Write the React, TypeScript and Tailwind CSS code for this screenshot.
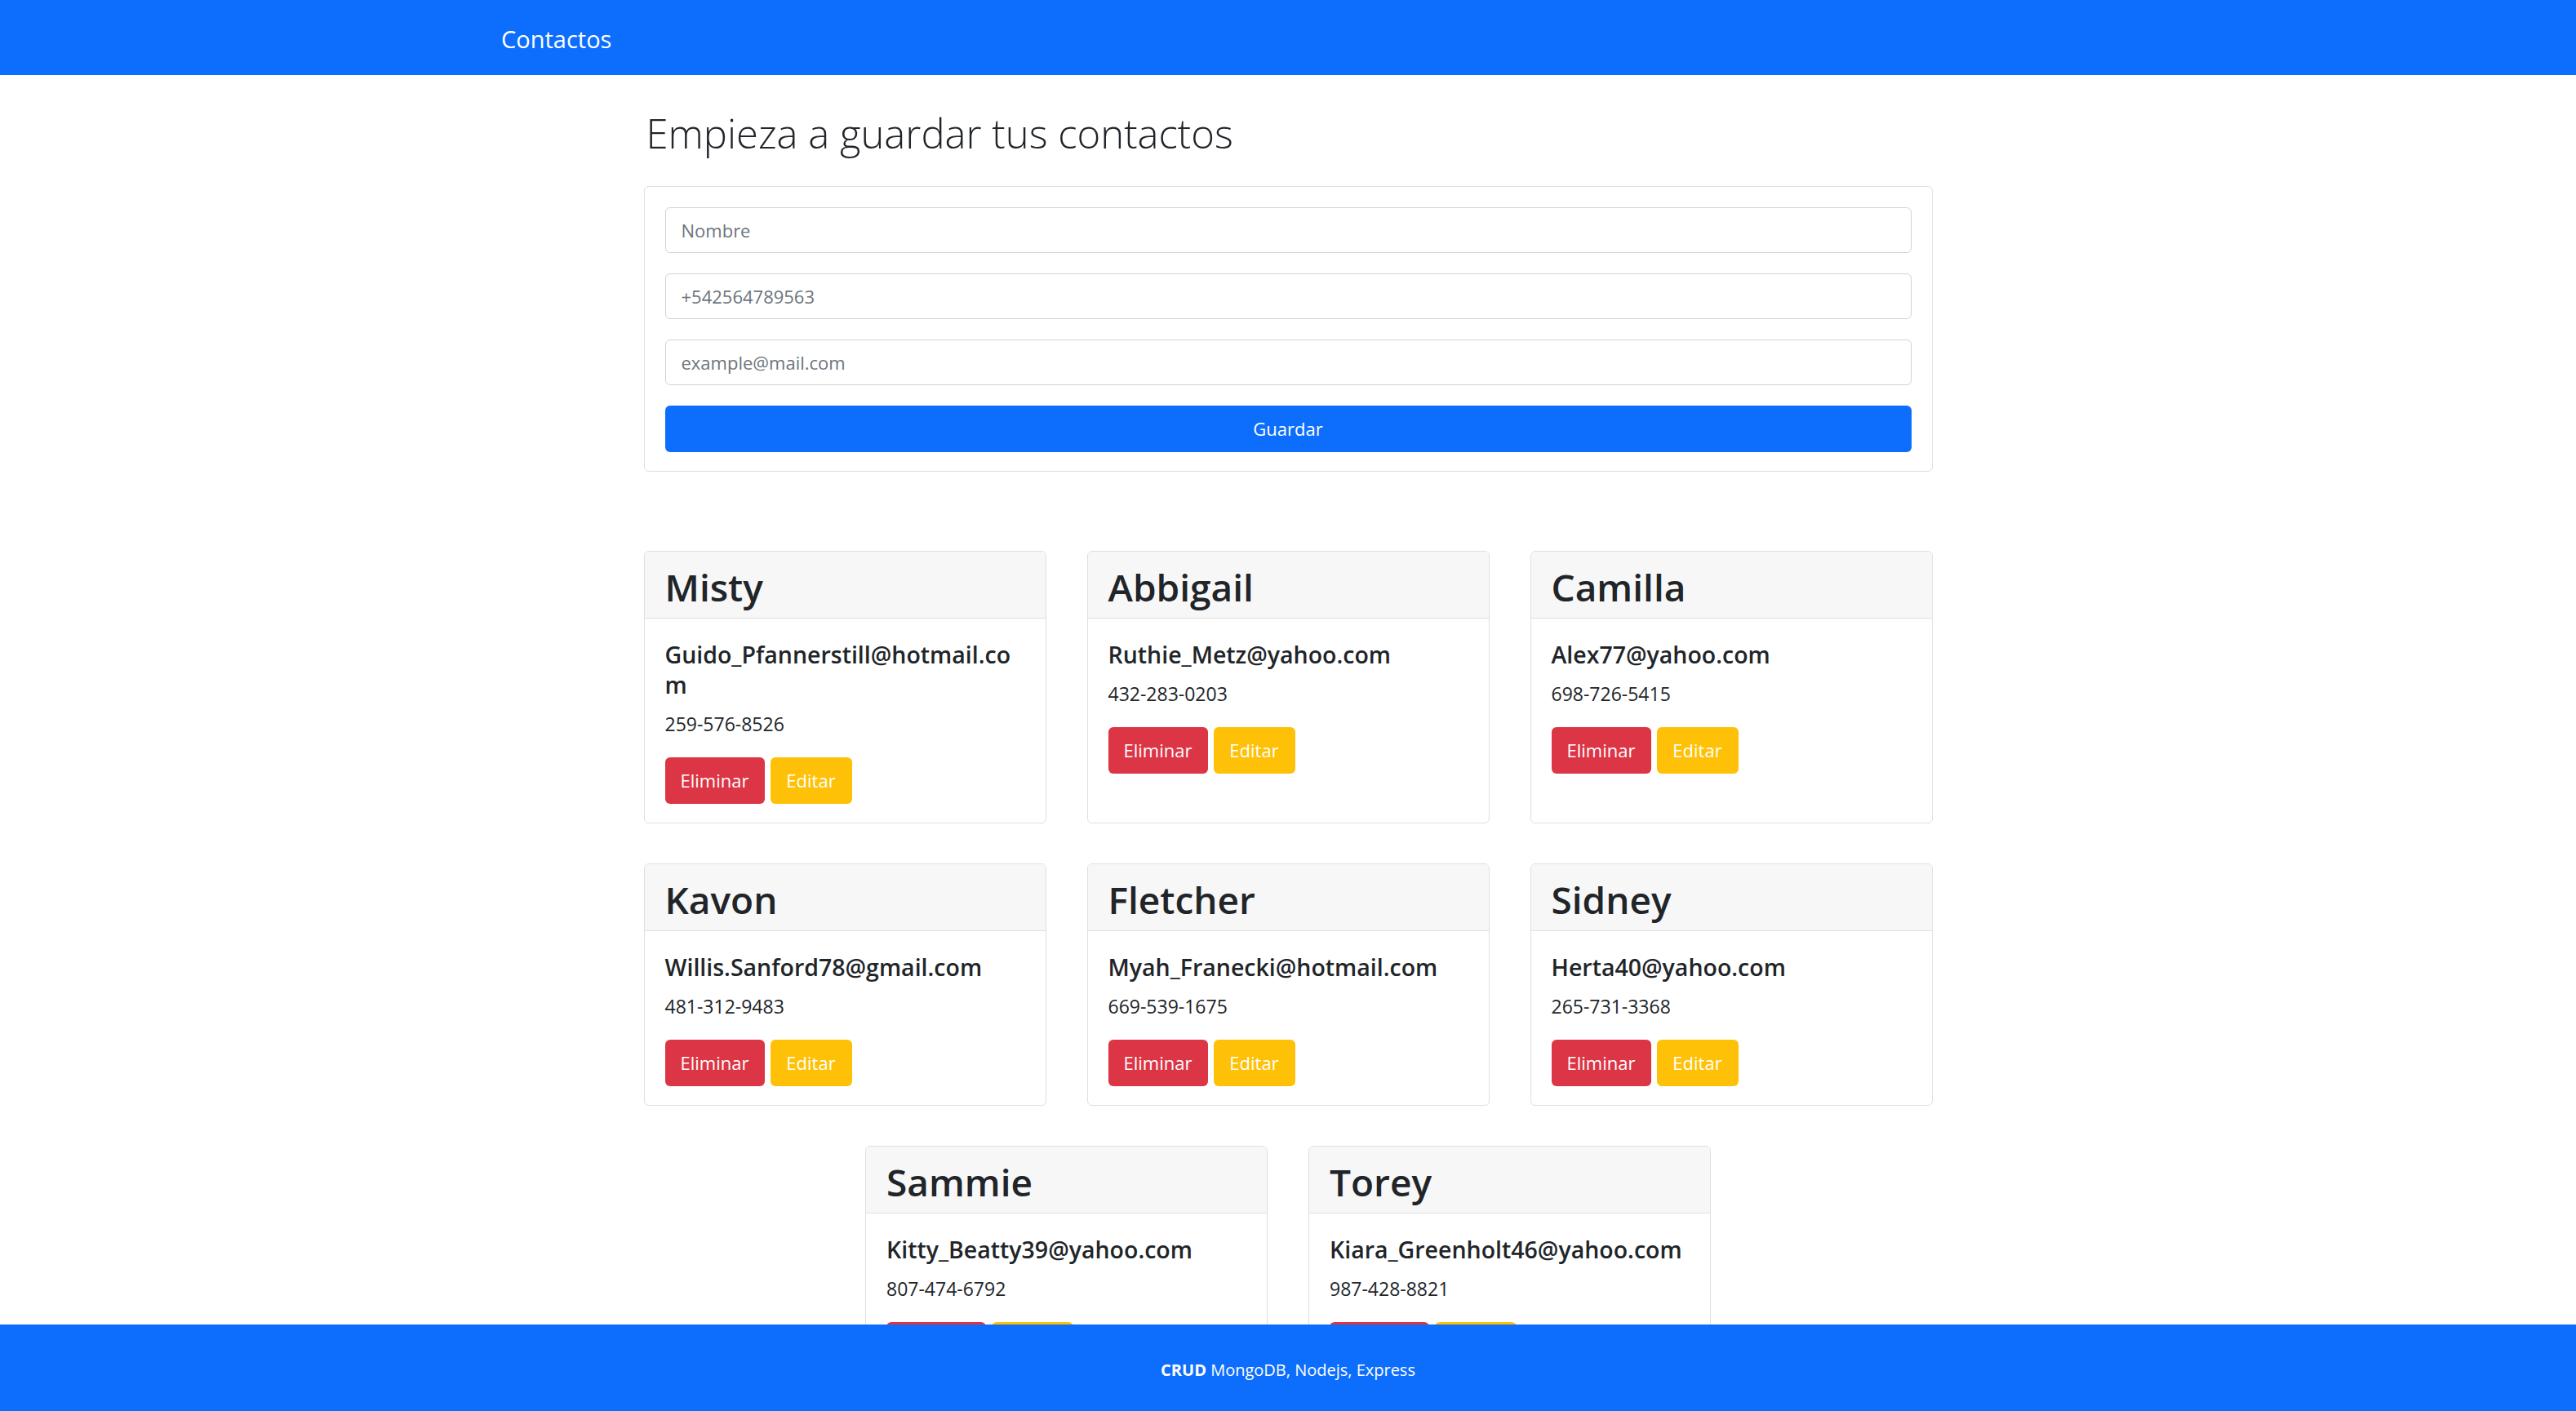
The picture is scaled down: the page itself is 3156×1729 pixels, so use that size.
import React from "react";

const contacts = [
  { name: "Misty", email: "Guido_Pfannerstill@hotmail.com", phone: "259-576-8526" },
  { name: "Abbigail", email: "Ruthie_Metz@yahoo.com", phone: "432-283-0203" },
  { name: "Camilla", email: "Alex77@yahoo.com", phone: "698-726-5415" },
  { name: "Kavon", email: "Willis.Sanford78@gmail.com", phone: "481-312-9483" },
  { name: "Fletcher", email: "Myah_Franecki@hotmail.com", phone: "669-539-1675" },
  { name: "Sidney", email: "Herta40@yahoo.com", phone: "265-731-3368" },
  { name: "Sammie", email: "Kitty_Beatty39@yahoo.com", phone: "807-474-6792" },
  { name: "Torey", email: "Kiara_Greenholt46@yahoo.com", phone: "987-428-8821" },
];

function ContactCard({ name, email, phone }: { name: string; email: string; phone: string }) {
  return (
    <div className="w-[493px] flex flex-col border border-[#dfdfdf] rounded-[6px] bg-white overflow-hidden">
      <div className="h-[82px] shrink-0 bg-[#f7f7f7] border-b border-[#dfdfdf] px-[25px] pt-[15px]">
        <h2 className="text-[46px] leading-[56px] font-semibold text-[#212529]">{name}</h2>
      </div>
      <div className="px-[25px] pt-[26px] pb-[23px]">
        <h5 className="text-[28.5px] leading-[37px] font-semibold text-[#212529] break-words">{email}</h5>
        <p className="mt-[12px] text-[23px] leading-[34px] text-[#212529]">{phone}</p>
        <div className="mt-[24px] flex gap-[7px]">
          <button className="w-[122px] h-[57px] rounded-[6px] bg-[#dc3545] text-white text-[22px] flex items-center justify-center">
            Eliminar
          </button>
          <button className="w-[100px] h-[57px] rounded-[6px] bg-[#ffc107] text-white text-[22px] flex items-center justify-center">
            Editar
          </button>
        </div>
      </div>
    </div>
  );
}

export default function App() {
  return (
    <div className="h-screen flex flex-col overflow-hidden bg-white font-['Open_Sans',sans-serif] text-[#212529]">
      <nav className="h-[92px] shrink-0 bg-[#0d6efd] flex items-center">
        <div className="w-[1928px] mx-auto pt-[3px]">
          <span className="text-white text-[29px] leading-[40px]">Contactos</span>
        </div>
      </nav>

      <main className="flex-1 overflow-hidden">
        <div className="w-[1579px] mx-auto">
          <h1 className="mt-[42px] mb-[36px] text-[49px] leading-[58px] font-light pl-[3px]">
            Empieza a guardar tus contactos
          </h1>

          <form className="border border-[#dfdfdf] rounded-[6px] px-[25px] pt-[25px] pb-[23px] flex flex-col gap-[25px]">
            <input
              className="h-[56px] w-full border border-[#ced4da] rounded-[6px] px-[19px] text-[22px] placeholder:text-[#6c757d] outline-none"
              placeholder="Nombre"
            />
            <input
              className="h-[56px] w-full border border-[#ced4da] rounded-[6px] px-[19px] text-[22px] placeholder:text-[#6c757d] outline-none"
              placeholder="+542564789563"
            />
            <input
              className="h-[56px] w-full border border-[#ced4da] rounded-[6px] px-[19px] text-[22px] placeholder:text-[#6c757d] outline-none"
              placeholder="example@mail.com"
            />
            <button
              type="button"
              className="h-[57px] w-full rounded-[6px] bg-[#0d6efd] text-white text-[22px] flex items-center justify-center"
            >
              Guardar
            </button>
          </form>

          <div className="mt-[97px] flex flex-wrap justify-center gap-x-[50px] gap-y-[49px]">
            {contacts.map((c) => (
              <ContactCard key={c.name} {...c} />
            ))}
          </div>
        </div>
      </main>

      <footer className="h-[106px] shrink-0 bg-[#0d6efd] flex items-center justify-center pt-[6px]">
        <span className="text-white text-[20px] leading-[30px]">
          <strong className="font-bold">CRUD</strong> MongoDB, Nodejs, Express
        </span>
      </footer>
    </div>
  );
}
